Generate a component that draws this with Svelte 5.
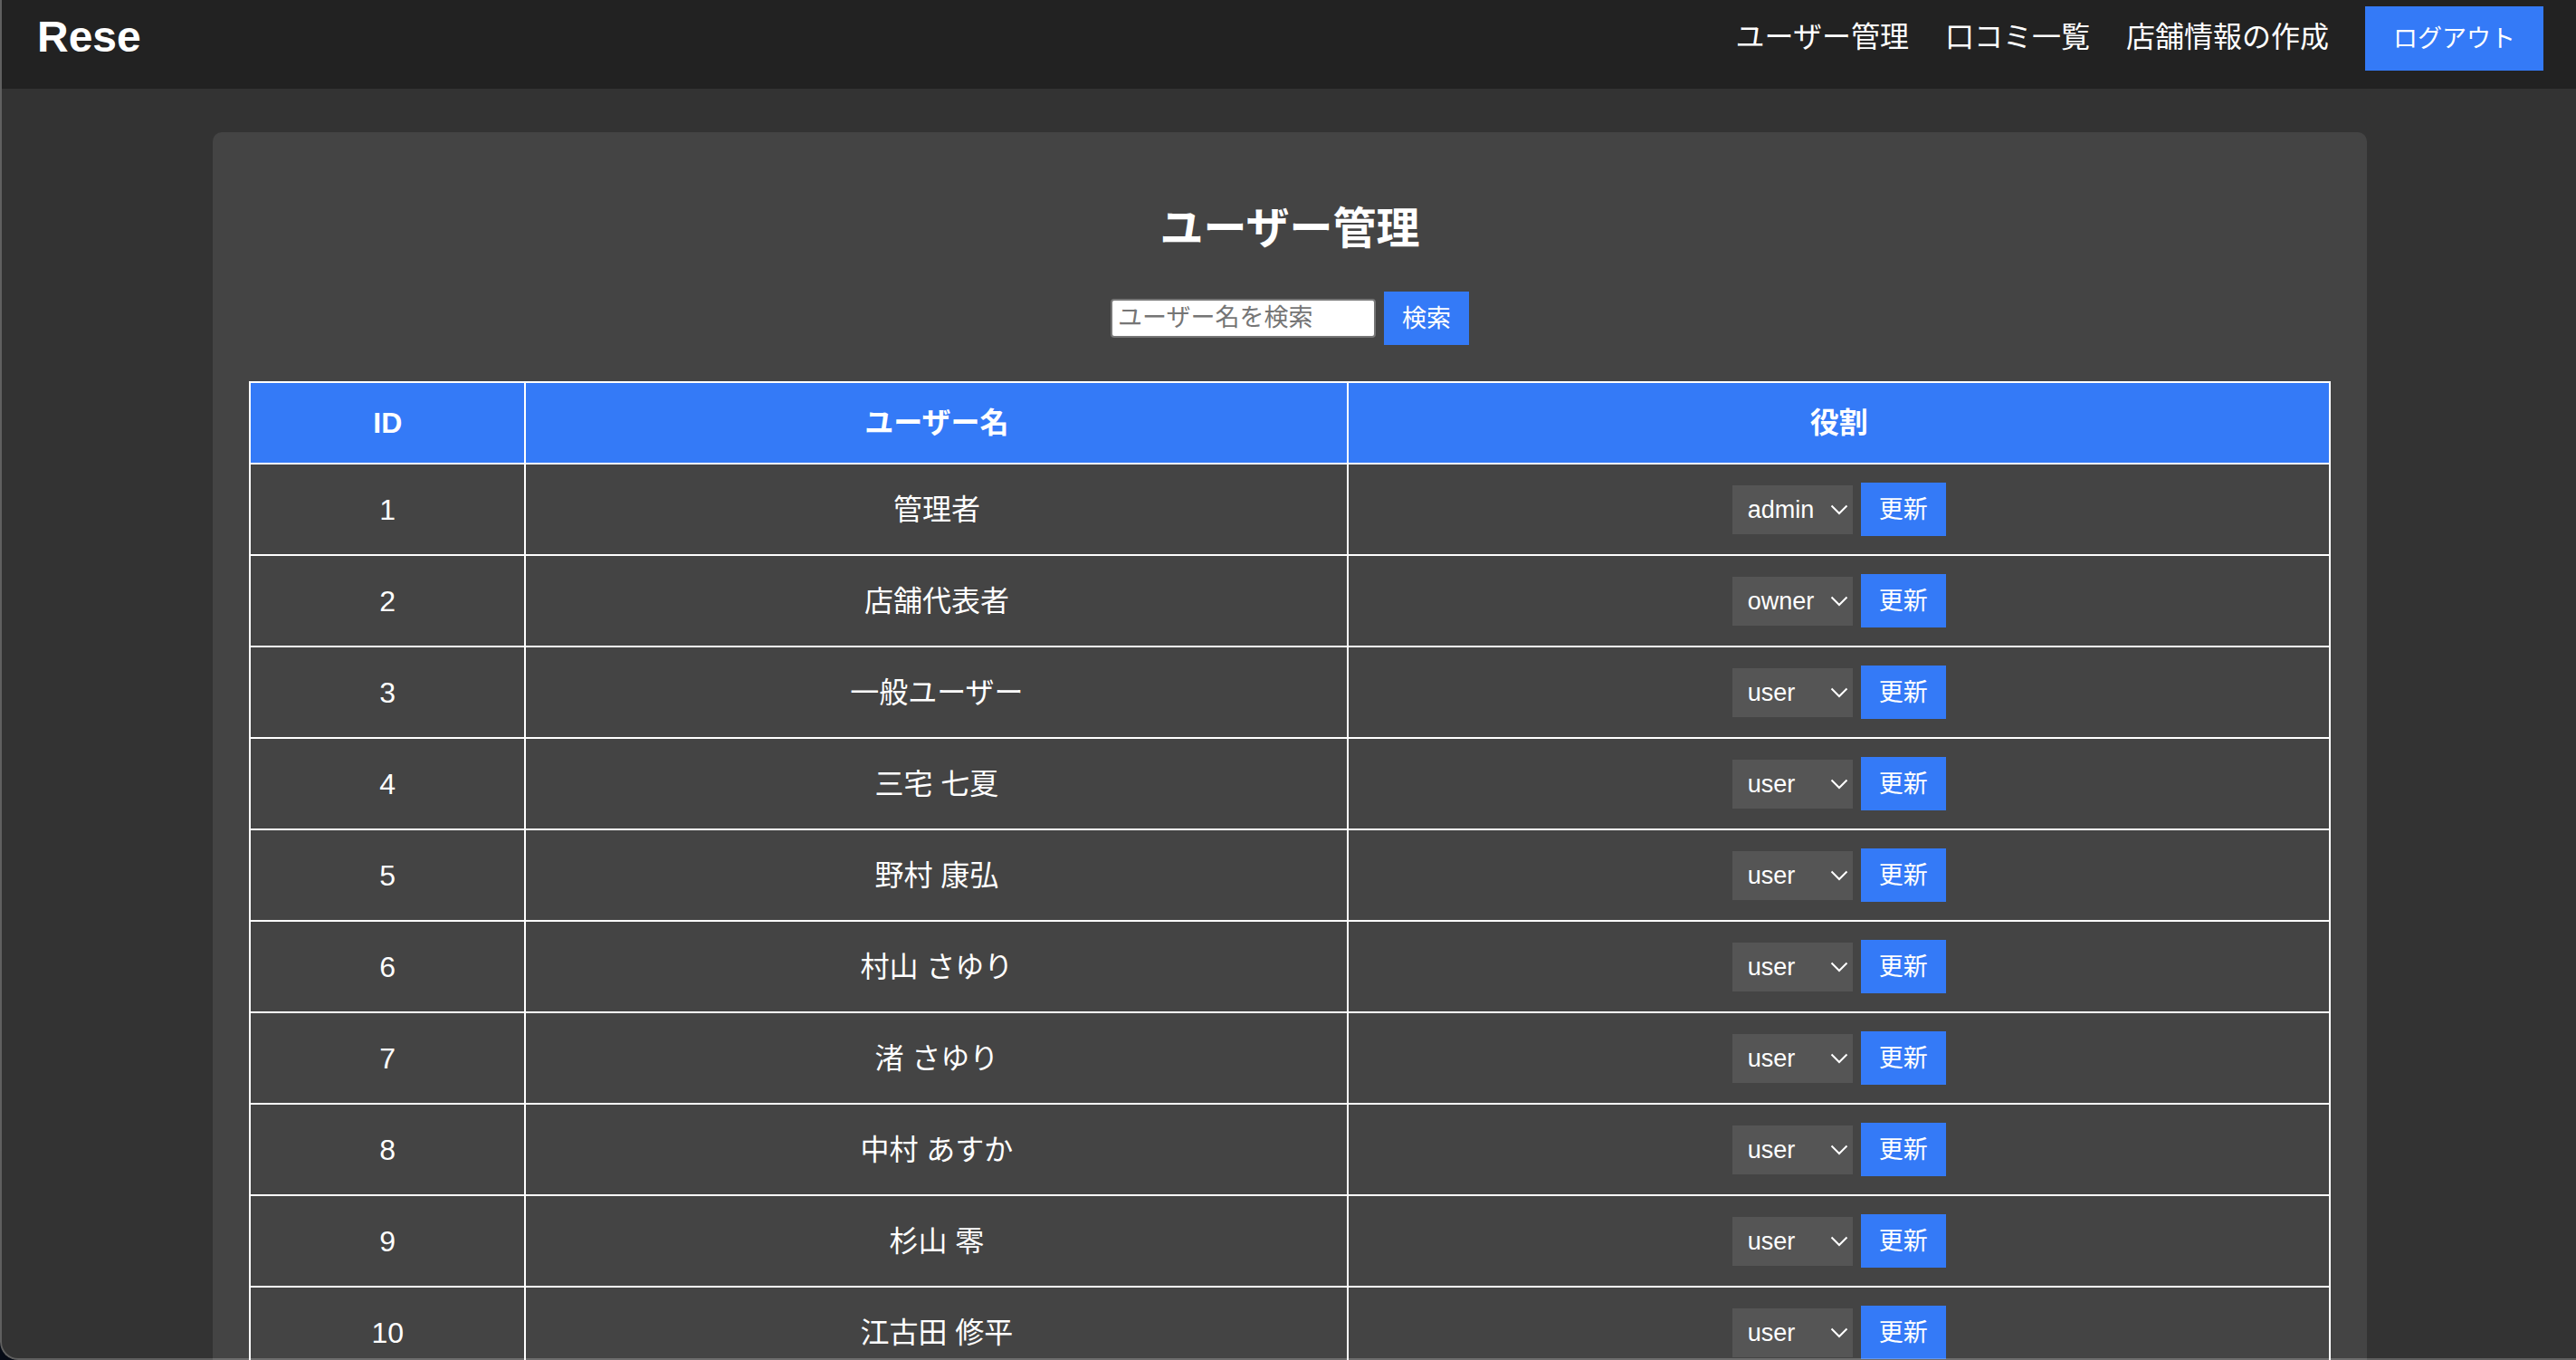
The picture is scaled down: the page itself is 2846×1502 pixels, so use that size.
<script>
  const links = ['ユーザー管理', '口コミ一覧', '店舗情報の作成'];
  const roles = ['admin', 'owner', 'user'];

  let users = $state([
    { id: 1, name: '管理者', role: 'admin' },
    { id: 2, name: '店舗代表者', role: 'owner' },
    { id: 3, name: '一般ユーザー', role: 'user' },
    { id: 4, name: '三宅 七夏', role: 'user' },
    { id: 5, name: '野村 康弘', role: 'user' },
    { id: 6, name: '村山 さゆり', role: 'user' },
    { id: 7, name: '渚 さゆり', role: 'user' },
    { id: 8, name: '中村 あすか', role: 'user' },
    { id: 9, name: '杉山 零', role: 'user' },
    { id: 10, name: '江古田 修平', role: 'user' }
  ]);
  let keyword = $state('');
</script>

<div class="window">
  <header>
    <h1>Rese</h1>
    <nav>
      {#each links as link}
        <a href="#top">{link}</a>
      {/each}
      <button class="logout" type="button">ログアウト</button>
    </nav>
  </header>

  <main>
    <h2>ユーザー管理</h2>
    <form class="search" onsubmit={(e) => e.preventDefault()}>
      <input type="text" aria-label="ユーザー名を検索" placeholder="ユーザー名を検索" bind:value={keyword} />
      <button type="submit">検索</button>
    </form>
    <table>
      <colgroup>
        <col class="col-id" />
        <col class="col-name" />
        <col />
      </colgroup>
      <thead>
        <tr><th>ID</th><th>ユーザー名</th><th>役割</th></tr>
      </thead>
      <tbody>
        {#each users as user (user.id)}
          <tr>
            <td>{user.id}</td>
            <td>{user.name}</td>
            <td>
              <form class="role" onsubmit={(e) => e.preventDefault()}>
                <span class="select">
                  <select aria-label="{user.name}の役割" bind:value={user.role}>
                    {#each roles as role}
                      <option value={role}>{role}</option>
                    {/each}
                  </select>
                  <svg viewBox="0 0 20 12" aria-hidden="true"><path d="M1.5 1.5 10 10l8.5-8.5" /></svg>
                </span>
                <button type="submit">更新</button>
              </form>
            </td>
          </tr>
        {/each}
      </tbody>
    </table>
  </main>
</div>

<style>
  :global(body) {
    background: #060b16;
  }

  .window {
    position: relative;
    box-sizing: border-box;
    height: 100vh;
    overflow: hidden;
    padding-left: 2px;
    border-bottom-left-radius: 20px;
    background: #333;
    color: #fff;
    font-family: 'Liberation Sans', Arial, 'Noto Sans CJK JP', sans-serif;
    font-size: 32px;
    line-height: 48px;
  }

  .window::after {
    content: '';
    position: absolute;
    inset: 0;
    border-left: 2px solid rgba(255, 255, 255, 0.22);
    border-bottom: 2px solid rgba(255, 255, 255, 0.22);
    border-bottom-left-radius: 20px;
    pointer-events: none;
  }

  header {
    display: flex;
    justify-content: space-between;
    align-items: flex-start;
    padding: 7px 36px 20px 39px;
    background: #222;
  }

  h1 {
    margin: 0;
    font-size: 48px;
    line-height: 68px;
  }

  nav {
    display: flex;
    align-items: flex-start;
    gap: 40px;
  }

  a {
    color: inherit;
    line-height: 68px;
    text-decoration: none;
  }

  button {
    box-sizing: border-box;
    height: 59px;
    margin: 0;
    padding: 0 20px;
    border: 0;
    background: #347af7;
    color: #fff;
    font-family: inherit;
    font-size: 27px;
    line-height: 40px;
    cursor: pointer;
  }

  .logout {
    height: 71px;
    padding: 0 31px;
  }

  main {
    margin: 48px 231px 0 233px;
    padding: 80px 40px 40px;
    border-radius: 10px;
    background: #444;
  }

  h2 {
    margin: 0 0 42px;
    font-size: 48px;
    line-height: 54px;
    text-align: center;
  }

  .search,
  .role {
    display: flex;
    justify-content: center;
    align-items: center;
    gap: 9px;
  }

  .search {
    margin-bottom: 40px;
  }

  input {
    box-sizing: border-box;
    width: 293px;
    height: 43px;
    padding: 0 6px;
    border: 2px solid #767676;
    border-radius: 4px;
    background: #fff;
    color: #000;
    font-family: inherit;
    font-size: 27px;
  }

  input::placeholder {
    color: #757575;
  }

  table {
    width: 100%;
    table-layout: fixed;
    border-collapse: collapse;
  }

  .col-id {
    width: 13.25%;
  }

  .col-name {
    width: 39.55%;
  }

  th,
  td {
    padding: 20px;
    border: 2px solid #fff;
    text-align: center;
  }

  th {
    background: #347af7;
  }

  .select {
    position: relative;
    display: flex;
  }

  select {
    width: 133px;
    height: 54px;
    padding: 0 30px 0 17px;
    border: 0;
    border-radius: 0;
    background: #555;
    color: #fff;
    font-family: inherit;
    font-size: 27px;
    appearance: none;
  }

  svg {
    position: absolute;
    top: 21px;
    right: 5px;
    width: 20px;
    height: 12px;
    fill: none;
    stroke: #fff;
    stroke-width: 2;
    pointer-events: none;
  }
</style>
